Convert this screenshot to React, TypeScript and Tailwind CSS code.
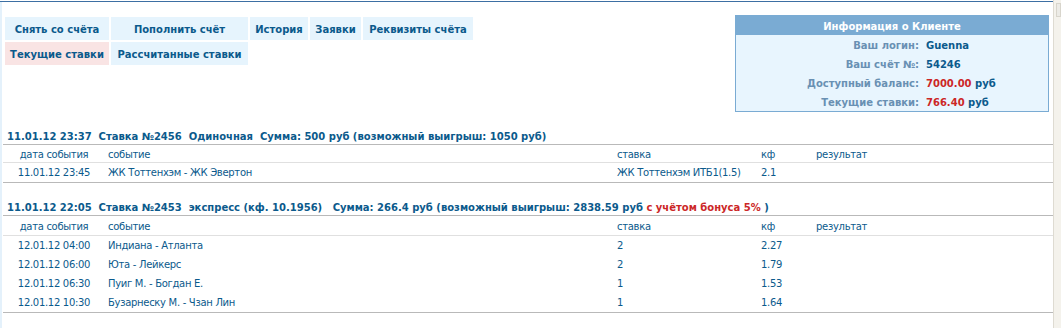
import React from "react";

const blue = "text-[#0b5a8c]";

function NavCell({ children, active }: { children: React.ReactNode; active?: boolean }) {
  return (
    <div
      className={`flex items-center justify-center whitespace-nowrap font-bold tracking-[0px] h-[23px] pt-[2px] ${
        active ? "bg-[#f9e4e4]" : "bg-[#e6f4fd]"
      }`}
    >
      {children}
    </div>
  );
}

type Row = { date: string; event: string; stake: string; kf: string; result?: string };

function BetTable({ header, rows, headH }: { header: React.ReactNode; rows: Row[]; headH: string }) {
  return (
    <div>
      <div className="h-[18px] flex items-center pt-[3px] pl-[4px] font-bold tracking-[0px] whitespace-pre border-b border-[#b9b9b9]">
        {header}
      </div>
      <div
        className={`grid grid-cols-[102px_509px_144px_55px_1fr] ${headH} pt-[3px] items-center border-b border-[#e0e0e0] whitespace-nowrap`}
      >
        <div className="text-center">дата события</div>
        <div className="pl-[3px]">событие</div>
        <div className="pl-[3px]">ставка</div>
        <div className="pl-[3px]">кф</div>
        <div className="pl-[3px]">результат</div>
      </div>
      <div className="border-b border-[#b9b9b9]">
        {rows.map((r, i) => (
          <div
            key={i}
            className="grid grid-cols-[102px_509px_144px_55px_1fr] h-[19px] pt-px items-center whitespace-nowrap"
          >
            <div className="text-center">{r.date}</div>
            <div className="pl-[3px]">{r.event}</div>
            <div className="pl-[3px]">{r.stake}</div>
            <div className="pl-[3px]">{r.kf}</div>
            <div className="pl-[3px]">{r.result ?? ""}</div>
          </div>
        ))}
      </div>
    </div>
  );
}

export default function App() {
  return (
    <div
      className={`flex w-[1061px] h-[328px] overflow-hidden bg-white font-['DejaVu_Sans',sans-serif] text-[10px] tracking-[-0.3px] leading-none ${blue}`}
    >
      <div className="w-[1053px] pt-px">
        <div className="h-full border-t border-[#3d6fa3] flex">
          <div className="w-[2px] bg-[#e4f1fb]" />
          <div className="flex-1 pl-px">
            {/* top section */}
            <div className="flex justify-between items-start h-[125px]">
              <div className="pt-[15px] pl-[2px]">
                <div className="grid grid-cols-[104px_137px_58px_51px_110px] gap-[2px]">
                  <NavCell>Снять со счёта</NavCell>
                  <NavCell>Пополнить счёт</NavCell>
                  <NavCell>История</NavCell>
                  <NavCell>Заявки</NavCell>
                  <NavCell>Реквизиты счёта</NavCell>
                  <NavCell active>Текущие ставки</NavCell>
                  <NavCell>Рассчитанные ставки</NavCell>
                </div>
              </div>
              <div className="mt-[13px] mr-[4px] w-[314px] border border-[#7aabd3] bg-[#e8f5fe] font-bold tracking-[0px]">
                <div className="h-[19px] pt-[2px] bg-[#7aabd3] text-white flex items-center justify-center">
                  Информация о Клиенте
                </div>
                {[
                  ["Ваш логин:", <span>Guenna</span>],
                  ["Ваш счёт №:", <span>54246</span>],
                  [
                    "Доступный баланс:",
                    <span>
                      <span className="text-[#cc2727]">7000.00</span> руб
                    </span>,
                  ],
                  [
                    "Текущие ставки:",
                    <span>
                      <span className="text-[#cc2727]">766.40</span> руб
                    </span>,
                  ],
                ].map(([l, v], i) => (
                  <div key={i} className="grid grid-cols-[183px_1fr] h-[19px] pt-[2px] items-center">
                    <div className="text-right text-[#6990b3]">{l}</div>
                    <div className="pl-[7px]">{v}</div>
                  </div>
                ))}
              </div>
            </div>

            <BetTable
              headH="h-[18px]"
              header={"11.01.12 23:37  Ставка №2456  Одиночная  Сумма: 500 руб (возможный выигрыш: 1050 руб)"}
              rows={[
                { date: "11.01.12 23:45", event: "ЖК Тоттенхэм - ЖК Эвертон", stake: "ЖК Тоттенхэм ИТБ1(1.5)", kf: "2.1" },
              ]}
            />
            <div className="h-[15px]" />
            <BetTable
              headH="h-[20px]"
              header={
                <>
                  {"11.01.12 22:05  Ставка №2453  экспресс (кф. 10.1956)   Сумма: 266.4 руб (возможный выигрыш: 2838.59 руб "}
                  <span className="text-[#cc2727]">с учётом бонуса 5%</span>
                  {" )"}
                </>
              }
              rows={[
                { date: "12.01.12 04:00", event: "Индиана - Атланта", stake: "2", kf: "2.27" },
                { date: "12.01.12 06:00", event: "Юта - Лейкерс", stake: "2", kf: "1.79" },
                { date: "12.01.12 06:30", event: "Пуиг М. - Богдан Е.", stake: "1", kf: "1.53" },
                { date: "12.01.12 10:30", event: "Бузарнеску М. - Чзан Лин", stake: "1", kf: "1.64" },
              ]}
            />
          </div>
        </div>
      </div>
      <div className="w-[8px] border-l border-[#dedbd2] bg-[#f4f2ec] pt-[3px] pl-[2px]">
        <div className="h-[14px] border border-[#d8d5cc] bg-[#ecebe6]" />
      </div>
    </div>
  );
}
